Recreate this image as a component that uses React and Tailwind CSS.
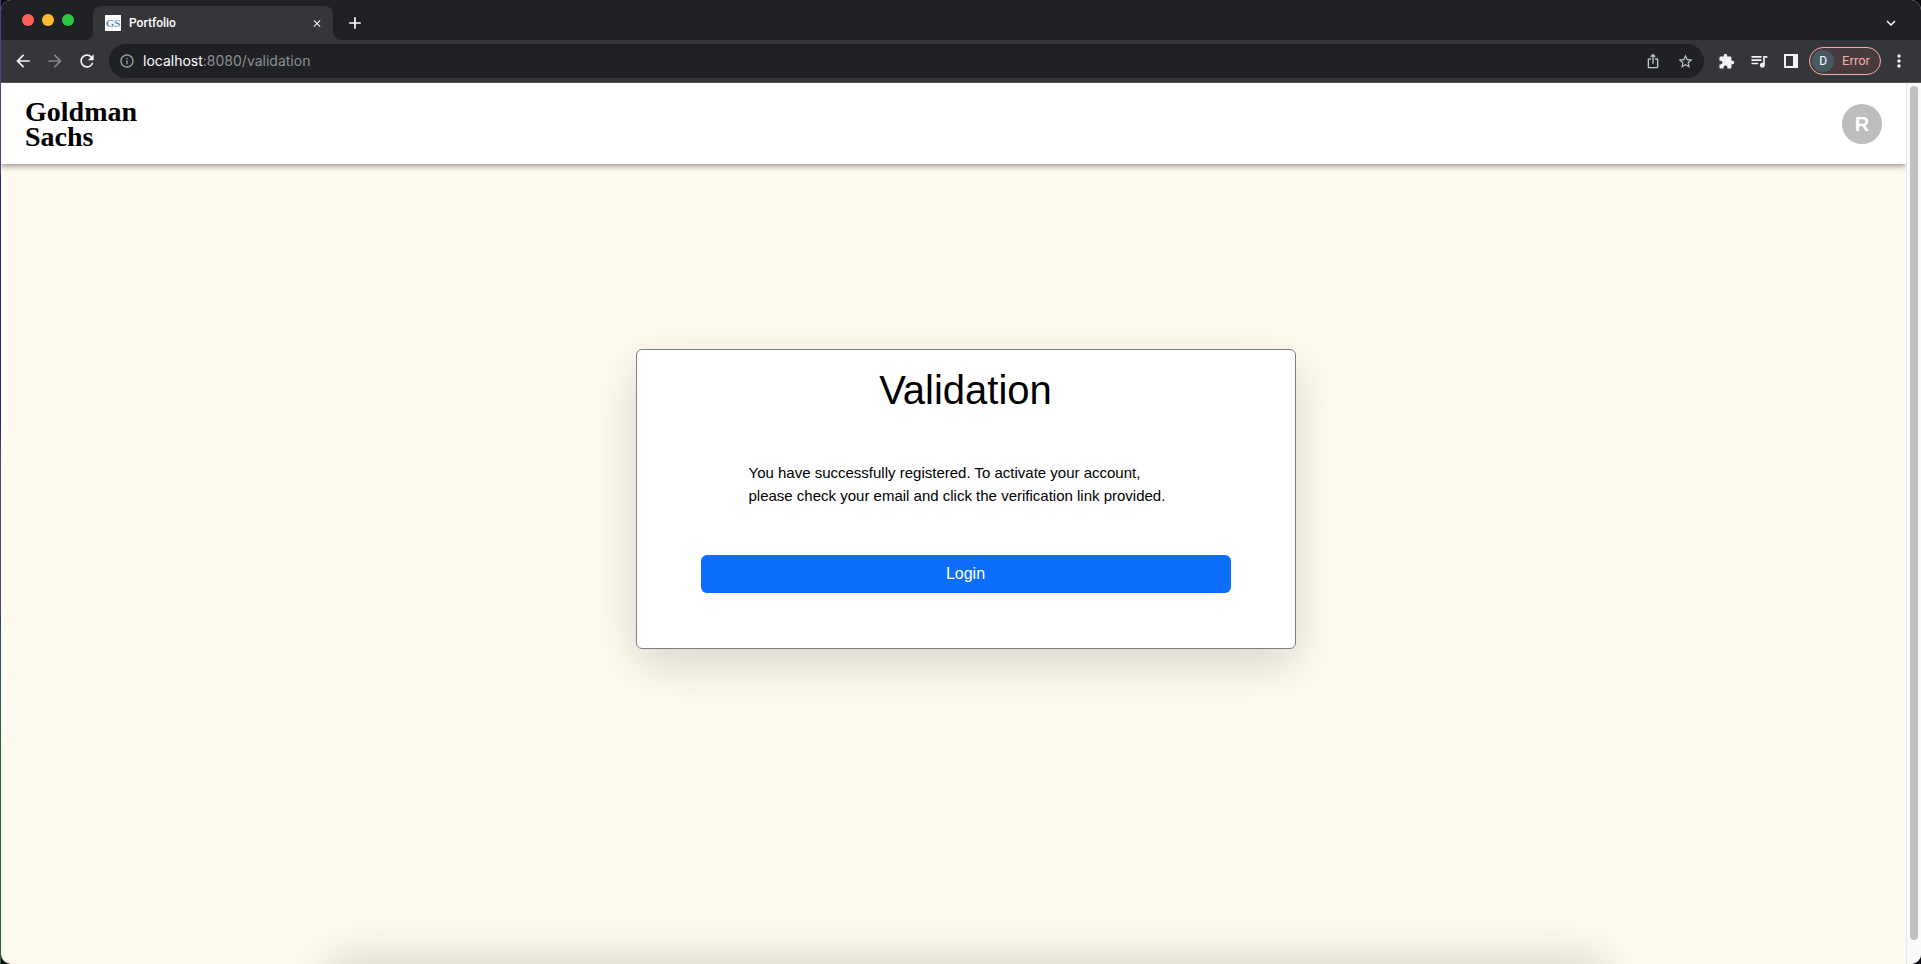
import React from "react";
import { MdArrowBack, MdArrowForward, MdRefresh, MdInfoOutline, MdIosShare, MdStarBorder, MdExtension, MdQueueMusic, MdMoreVert, MdClose, MdAdd, MdExpandMore } from "react-icons/md";

function Tab() {
  return (
    <div className="relative flex h-[34px] w-60 items-center rounded-t-lg bg-[#35363a] pr-2.5 pl-3 text-white">
      <svg viewBox="0 0 8 8" className="absolute right-full bottom-0 size-2 text-[#35363a]"><path d="M8 0v8H0a8 8 0 0 0 8-8z" fill="currentColor" /></svg>
      <svg viewBox="0 0 8 8" className="absolute bottom-0 left-full size-2 text-[#35363a]"><path d="M0 0v8h8a8 8 0 0 1-8-8z" fill="currentColor" /></svg>
      <span className="mr-2 flex size-4 items-center justify-center overflow-hidden bg-white font-['Liberation_Serif',serif] text-[11px] leading-4 font-bold text-[#5f8bc0]">GS</span>
      <span className="flex-1 font-['Roboto',sans-serif] text-xs font-medium">Portfolio</span>
      <button aria-label="Close tab" className="flex size-3 items-center justify-center">
        <MdClose size={13} />
      </button>
    </div>
  );
}

function TabStrip() {
  return (
    <div className="flex h-10 items-end bg-[#202124]">
      <div className="flex h-10 w-[92px] items-center gap-2 pb-px pl-[21px]">
        <span className="size-3 rounded-full bg-[#ff5f57]" />
        <span className="size-3 rounded-full bg-[#febc2e]" />
        <span className="size-3 rounded-full bg-[#28c840]" />
      </div>
      <Tab />
      <button aria-label="New tab" className="ml-3 flex h-[34px] items-center text-white">
        <MdAdd size={20} />
      </button>
      <button aria-label="Search tabs" className="mr-[21px] ml-auto flex h-[34px] items-center text-white">
        <MdExpandMore size={18} />
      </button>
    </div>
  );
}

function Toolbar() {
  return (
    <div className="flex h-[43px] items-center border-b border-[#55565a] bg-[#35363a] px-3 text-[#f1f3f4]">
      <button aria-label="Back" className="mr-3"><MdArrowBack size={20} /></button>
      <button aria-label="Forward" className="mr-3 text-[#86878a]"><MdArrowForward size={20} /></button>
      <button aria-label="Reload" className="mr-3"><MdRefresh size={20} /></button>
      <div className="flex h-[34px] flex-1 items-center rounded-full bg-[#202124] px-2.5">
        <MdInfoOutline size={16} className="mr-2 text-[#9aa0a6]" />
        <span className="flex-1 font-['Inter',sans-serif] text-sm text-[#8e9195]">
          <span className="text-white">localhost</span>:8080/validation
        </span>
        <button aria-label="Share" className="mr-4 text-[#c4c7ca]"><MdIosShare size={16} /></button>
        <button aria-label="Bookmark" className="text-[#c4c7ca]"><MdStarBorder size={17} /></button>
      </div>
      <button aria-label="Extensions" className="ml-3.5"><MdExtension size={17} /></button>
      <button aria-label="Media" className="ml-3.5"><MdQueueMusic size={20} /></button>
      <button aria-label="Side panel" className="ml-[15px]">
        <svg viewBox="0 0 14 14" className="size-3.5"><path d="M0 0h14v14H0z M2 2v10h7V2z" fill="currentColor" fillRule="evenodd" /></svg>
      </button>
      <button className="ml-[11px] flex h-7 items-center gap-2 rounded-full border border-[#f6aea9] bg-[#483b3d] pr-2.5 pl-0.5 font-['Roboto',sans-serif] text-[13px] text-[#f6aea9]">
        <span className="flex size-[22px] items-center justify-center rounded-full bg-[#455a64] text-xs text-white">D</span>
        Error
      </button>
      <button aria-label="Menu" className="ml-2"><MdMoreVert size={20} /></button>
    </div>
  );
}

function Header() {
  return (
    <header className="relative z-10 flex h-[81px] shrink-0 items-center justify-between bg-white px-6 shadow-[0_2px_4px_-1px_rgba(0,0,0,0.2),0_4px_5px_0_rgba(0,0,0,0.14),0_1px_10px_0_rgba(0,0,0,0.12)]">
      <a href="#home" className="flex flex-col font-['Liberation_Serif',serif] text-[28px] leading-[25px] font-bold text-black">
        <span>Goldman</span>
        <span>Sachs</span>
      </a>
      <button className="flex size-10 items-center justify-center rounded-full bg-[#bdbdbd] font-['Liberation_Sans',sans-serif] text-xl leading-5 font-bold text-white">R</button>
    </header>
  );
}

function ValidationCard() {
  return (
    <section className="mx-auto flex h-[300px] w-[660px] flex-col items-center rounded-md border border-[#808080] bg-white font-['Liberation_Sans',sans-serif] text-black shadow-[0_16px_48px_rgba(0,0,0,0.15)]">
      <h1 className="mt-4 text-[40px] leading-12">Validation</h1>
      <p className="mt-[47px] w-[434px] text-[15px] leading-[23px]">
        You have successfully registered. To activate your account,<br />
        please check your email and click the verification link provided.
      </p>
      <button className="mt-12 h-[38px] w-[530px] rounded-md bg-[#0d6efd] text-base text-white">Login</button>
    </section>
  );
}

export default function App() {
  return (
    <div className="flex h-screen overflow-hidden bg-[#0b0b14]">
      <div className="w-px bg-[linear-gradient(#54407f_0_18%,#1f2f7a_18%_44%,#5a4080_48%_63%,#1f4f70_64%,#1f6b45_80%)]" />
      <div className="flex min-w-0 flex-1 flex-col overflow-hidden rounded-[10px] bg-[#fffaef]">
        <TabStrip />
        <Toolbar />
        <div className="flex min-h-0 flex-1">
          <div className="flex min-w-0 flex-1 flex-col overflow-hidden">
            <Header />
            <main className="min-h-0 flex-1 overflow-hidden pl-6">
              <div className="min-h-full pt-[185px]">
                <ValidationCard />
              </div>
              <div className="mx-auto h-20 w-[1280px] shadow-[0_-6px_48px_rgba(0,0,0,0.15)]" />
            </main>
          </div>
          <div className="w-[15px] border-l border-[#e6e6e6] bg-[#fafafa] pt-[3px] pr-[3px] pb-6 pl-[3px]">
            <div className="h-full w-2 rounded-full bg-[#c1c1c1]" />
          </div>
        </div>
      </div>
    </div>
  );
}
